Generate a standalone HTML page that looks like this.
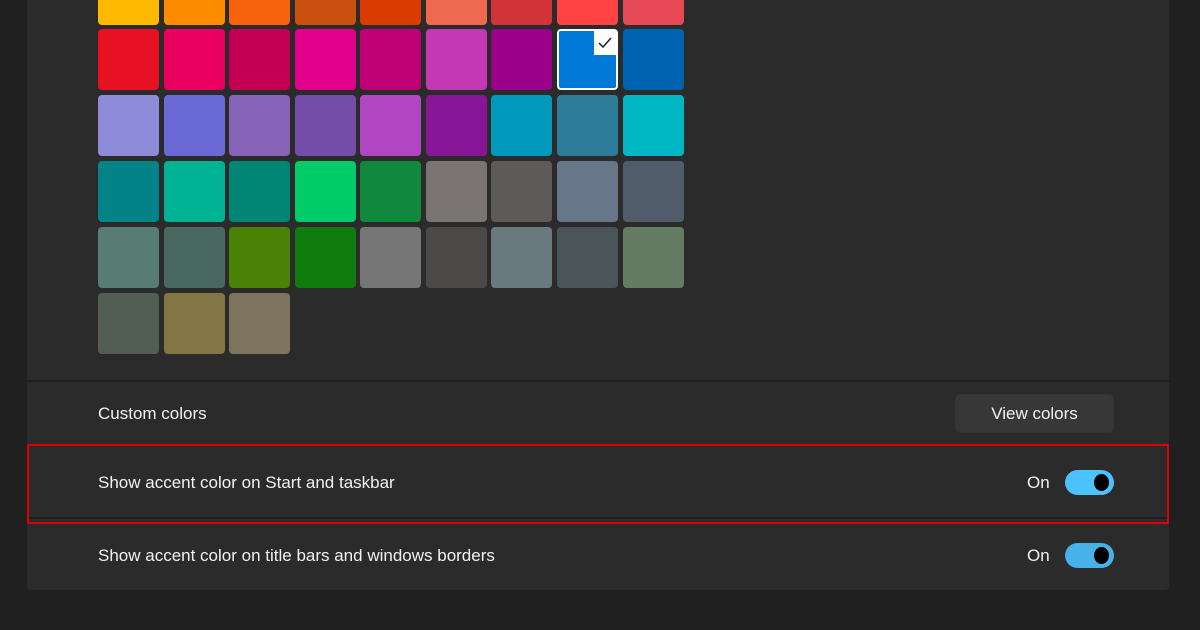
<!DOCTYPE html>
<html><head><style>
body{margin:0;width:1200px;height:630px;background:#202020;overflow:hidden;position:relative;font-family:"Segoe UI","Liberation Sans",sans-serif;color:#fff}
.card{position:absolute;left:27px;top:-10px;width:1142px;height:600px;background:#2b2b2b;border-radius:4px}
.t{position:absolute;width:61px;height:61px;border-radius:4px}
.sep{position:absolute;left:27px;width:1142px;height:2px;background:#1e1e1e}
.lbl{position:absolute;left:98px;font-size:17px;color:#f2f2f2}
.on{position:absolute;left:1027px;font-size:17px;color:#f2f2f2}
.tg{position:absolute;left:1065px;width:49px;height:25px;border-radius:13px}
.tg::after{content:"";position:absolute;right:5px;top:4px;width:15px;height:17px;border-radius:50%;background:#000}
</style></head><body>
<div class="card"></div>
<div id="g"></div>
<script>
var rows=[
["#ffb900","#ff8c00","#f7630c","#ca5010","#da3b01","#ef6950","#d13438","#ff4343","#e74856"],
["#e81123","#ea005e","#c30052","#e3008c","#bf0077","#c239b3","#9a0089","#0078d7","#0063b1"],
["#8e8cd8","#6b69d6","#8764b8","#744da9","#b146c2","#881798","#0099bc","#2d7d9a","#00b7c3"],
["#038387","#00b294","#018574","#00cc6a","#10893e","#7a7574","#5d5a58","#68768a","#515c6b"],
["#567c73","#486860","#498205","#107c10","#767676","#4c4a48","#69797e","#4a5459","#647c64"],
["#525e54","#847545","#7e735f"]];
var xs=[98,164,229,295,360,426,491,557,623],ys=[-36,29,95,161,227,293],h="";
rows.forEach(function(r,i){r.forEach(function(c,j){
var st="left:"+xs[j]+"px;top:"+ys[i]+"px;background:"+c;
if(i==1&&j==7){h+='<div class="t" style="'+st+';box-sizing:border-box;border:2px solid #fff;overflow:hidden"><div style="position:absolute;right:0;top:0;width:22px;height:24px;background:#fff"></div><svg style="position:absolute;right:3px;top:5px" width="16" height="14"><path d="M2 7 L6 11 L14 2" stroke="#222" stroke-width="1.5" fill="none"/></svg></div>';}
else h+='<div class="t" style="'+st+'"></div>';});});
document.getElementById("g").innerHTML=h;
</script>
<div class="sep" style="top:380px"></div>
<div class="lbl" style="top:404px">Custom colors</div>
<div style="position:absolute;left:955px;top:394px;width:159px;height:39px;background:#373737;border-radius:5px;border:1px solid #333;box-sizing:border-box;font-size:17px;text-align:center;line-height:38px;color:#f2f2f2">View colors</div>
<div class="sep" style="top:517px"></div>
<div class="lbl" style="top:473px">Show accent color on Start and taskbar</div>
<div class="on" style="top:473px">On</div>
<div class="tg" style="top:470px;background:#4cc2ff"></div>
<div style="position:absolute;left:27px;top:444px;width:1142px;height:80px;box-sizing:border-box;border:2px solid #e00000"></div>
<div class="lbl" style="top:546px">Show accent color on title bars and windows borders</div>
<div class="on" style="top:546px">On</div>
<div class="tg" style="top:543px;background:#47b1e8"></div>
</body></html>
